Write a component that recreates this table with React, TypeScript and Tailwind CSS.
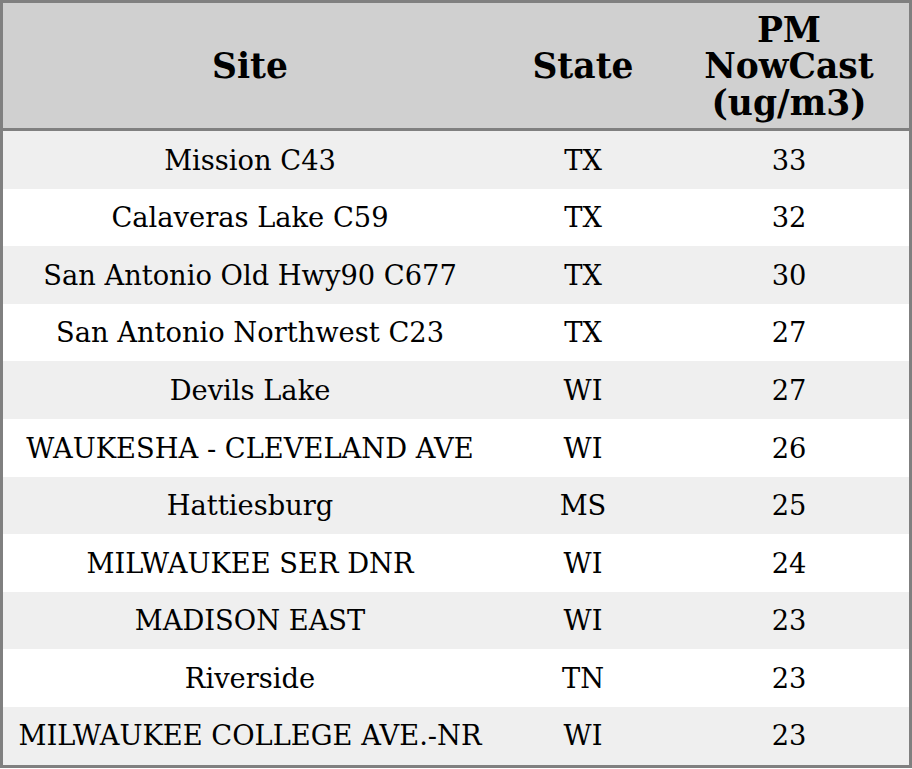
import React from "react";

const rows: [string, string, string][] = [
  ["Mission C43", "TX", "33"],
  ["Calaveras Lake C59", "TX", "32"],
  ["San Antonio Old Hwy90 C677", "TX", "30"],
  ["San Antonio Northwest C23", "TX", "27"],
  ["Devils Lake", "WI", "27"],
  ["WAUKESHA - CLEVELAND AVE", "WI", "26"],
  ["Hattiesburg", "MS", "25"],
  ["MILWAUKEE SER DNR", "WI", "24"],
  ["MADISON EAST", "WI", "23"],
  ["Riverside", "TN", "23"],
  ["MILWAUKEE COLLEGE AVE.-NR", "WI", "23"],
];

export default function App() {
  return (
    <div className="bg-white w-[912px] h-[769px]" style={{ fontFamily: '"DejaVu Serif", serif' }}>
      <div className="w-[912px] border-[3px] border-[#808080] box-border text-black">
        <div className="grid grid-cols-[494px_172px_240px] h-[128px] bg-[#d0d0d0] border-b-[3px] border-[#808080] items-center text-center font-bold text-[34.5px] leading-[36.5px] pt-[2px]">
          <div>Site</div>
          <div>State</div>
          <div>
            PM
            <br />
            NowCast
            <br />
            (ug/m3)
          </div>
        </div>
        {rows.map((r, i) => (
          <div
            key={i}
            className={`grid grid-cols-[494px_172px_240px] h-[57.6px] items-center text-center text-[27.3px] leading-[32px] pt-[1.5px] ${
              i % 2 === 0 ? "bg-[#efefef]" : "bg-white"
            }`}
          >
            <div>{r[0]}</div>
            <div>{r[1]}</div>
            <div>{r[2]}</div>
          </div>
        ))}
      </div>
    </div>
  );
}
